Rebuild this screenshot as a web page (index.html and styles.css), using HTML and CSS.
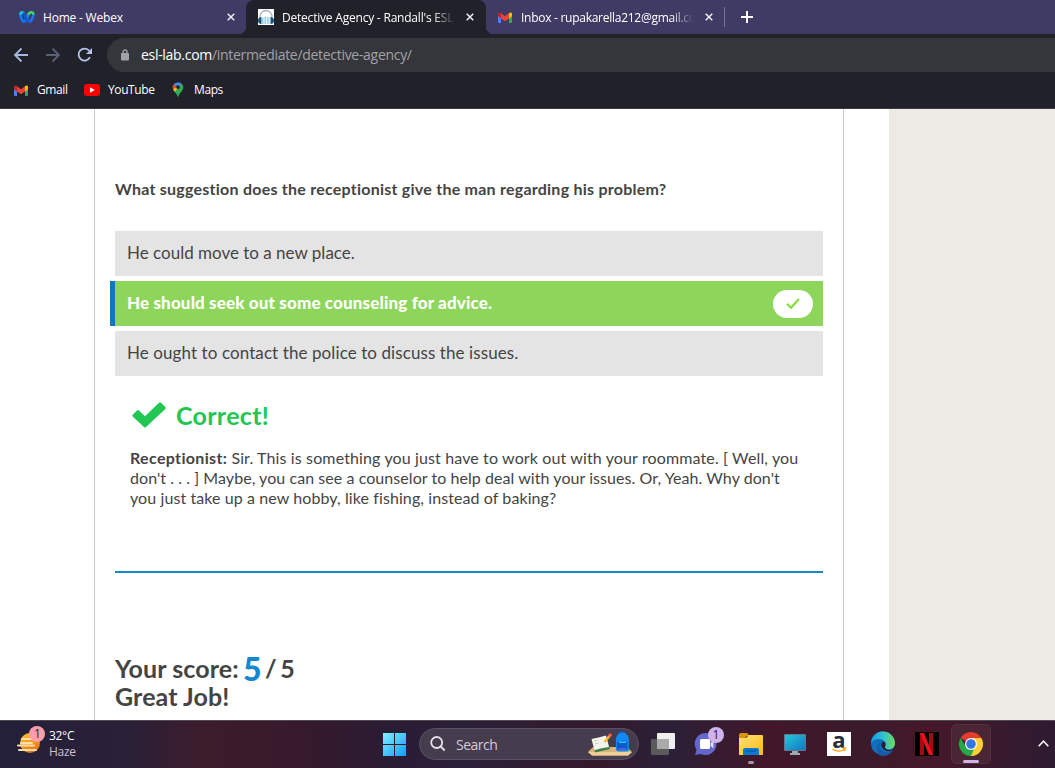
FILE: index.html
```html
<!DOCTYPE html>
<html lang="en">
<head>
<meta charset="utf-8">
<title>Detective Agency - Randall's ESL</title>
<link rel="stylesheet" href="styles.css">
</head>
<body>
<svg class="defs" width="0" height="0" aria-hidden="true">
  <symbol id="gmail" viewBox="0 0 14 11">
    <path fill="#4285f4" d="M0 2h3v9H1a1 1 0 0 1-1-1z"/>
    <path fill="#34a853" d="M11 3h3v7a1 1 0 0 1-1 1h-2z"/>
    <path fill="#fbbc04" d="M11 1.2C12.300 0 14 .6 14 2v2.200l-3 2.200z"/>
    <path fill="#c5221f" d="M0 2C0 .6 1.700 0 3 1.200v5.200L0 4.200z"/>
    <path fill="#ea4335" d="M3 1.200l4 3 4-3v5.200L7 9.300 3 6.400z"/>
  </symbol>
  <symbol id="close" viewBox="0 0 8 8"><path d="M.7.7l6.600 6.600M7.300.7L.7 7.300" stroke="#eeedf5" stroke-width="1.500"/></symbol>
</svg>
<header class="browser">
  <div class="tabs">
    <div class="tab tab-first">
      <svg class="fav" width="16" height="12" viewBox="0 0 16 12" fill="none" stroke-width="2.600" stroke-linecap="round">
        <path d="M8 7.500C9.500 12 12 11 13.300 7.500 14.400 5 14.700 3.500 14.300 2.500" stroke="#1676f3"/>
        <path d="M8.500 5.500C9.500 2 11 1.200 12.500 1.200q1.500.2 1.800 1.600" stroke="#42d36b"/>
        <path d="M1.500 3C1.500 6 3 10.500 5 10.500S7.500 8 8.500 5" stroke="#087cf0"/>
        <path d="M1.500 3C1.300 1.200 4 .8 5 2.500" stroke="#18c5da"/>
        <path d="M5 2.500C6.500 6 7 10 9.500 10.500" stroke="#1850d8"/>
      </svg>
      <span class="tab-title home">Home - Webex</span>
      <svg class="x" width="8" height="8"><use href="#close"/></svg>
    </div>
    <div class="tab tab-active">
      <svg class="fav" width="16" height="16" viewBox="0 0 16 16">
        <path fill="#fff" d="M0 0h16v16H0z"/><path d="M2 9C1-1 15-1 14 9" fill="none" stroke="#a6b2bc" stroke-width="1.300"/>
        <path d="M4 15V9q4-3 8 0v6z" fill="#9ed0e6"/><path d="M6 8v7M8.500 7v8M11 8v7" stroke="#e9f6fa"/>
        <path d="M3.500 8v7C1 15 0 13.500 0 11.500S1.500 8 3.500 8zM12.500 8v7c2.500 0 3.500-1.500 3.500-3.500S14.500 8 12.500 8z" fill="#17577d"/>
      </svg>
      <span class="tab-title fade detective">Detective Agency - Randall's ESL</span>
      <svg class="x" width="8" height="8"><use href="#close"/></svg>
    </div>
    <div class="tab tab-last">
      <svg class="fav" width="14" height="11"><use href="#gmail"/></svg>
      <span class="tab-title fade inbox">Inbox - rupakarella212@gmail.co</span>
      <svg class="x" width="8" height="8"><use href="#close"/></svg>
    </div>
    <span class="tab-rule"></span>
    <svg class="new-tab" width="12" height="12" viewBox="0 0 12 12"><path d="M6 0v12M0 6h12" stroke="#fff" stroke-width="1.900"/></svg>
  </div>
  <div class="toolbar">
    <svg class="nav" width="90" height="34" viewBox="0 0 90 34" fill="none" stroke-width="1.800">
      <path d="M28 17H15M21.500 10.500L15 17l6.500 6.500" stroke="#a8b7da"/>
      <path d="M46 17h13M52.500 10.500L59 17l-6.500 6.500" stroke="#596174"/>
      <path d="M90 19.200A6 6 0 1 1 89.300 12.800" stroke="#b5c4e8"/><path d="M92 10v6h-6z" fill="#b5c4e8"/>
    </svg>
    <div class="omnibox">
      <svg width="8" height="12" viewBox="0 0 8 12"><path d="M2 5V3a2 2 0 0 1 4 0v2" fill="none" stroke="#a0a2a8" stroke-width="1.300"/><rect y="4" width="8" height="7.500" rx="1" fill="#a0a2a8"/></svg>
      <span class="url"><b>esl-lab.com</b>/intermediate/detective-agency/</span>
    </div>
  </div>
  <nav class="bookmarks">
    <svg width="14" height="11"><use href="#gmail"/></svg><span class="bm-gmail">Gmail</span>
    <svg width="16" height="12" viewBox="0 0 16 12"><rect width="16" height="12" rx="3" fill="#f00"/><path d="M6 3.300L10.800 6 6 8.700z" fill="#fff"/></svg><span class="bm-youtube">YouTube</span>
    <svg width="12" height="16" viewBox="0 0 12 16">
      <path d="M.7 5C.7-.8 11.300-.8 11.300 5 11.300 9 7.500 10.500 6 15.500 4.500 10.500.7 9 .7 5z" fill="#34a853"/>
      <path d="M6 .6a5 5 0 0 0-4 1.700L6 5.500 9.500 1.700A5 5 0 0 0 6 .6z" fill="#4285f4"/>
      <path d="M2 2.300C.5 4 .5 6 1.200 7.500L5 4.700z" fill="#ea4335"/><path d="M1.200 7.500L2.800 9.700 9 3l-4 1.700z" fill="#fbbc04"/><circle cx="6" cy="5.100" r="1.900" fill="#202129"/>
    </svg><span class="bm-maps">Maps</span>
  </nav>
</header>
<main class="page">
  <article class="quiz">
    <h2 class="question">What suggestion does the receptionist give the man regarding his problem?</h2>
    <ul class="answers">
      <li><span>He could move to a new place.</span></li>
      <li class="chosen"><span>He should seek out some counseling for advice.</span>
        <i class="pill"><svg width="14" height="11" viewBox="0 0 14 11"><path d="M1 5.800l4 3.900L13 1" fill="none" stroke="#7de02f" stroke-width="2"/></svg></i></li>
      <li><span class="third">He ought to contact the police to discuss the issues.</span></li>
    </ul>
    <section class="feedback">
      <h3><svg width="34" height="26" viewBox="0 0 34 26"><path d="M.7 12.800L5 8.500q1-1 2 0l6 5.700L27 .8q1-1 2 0l4.300 4.100q1 1 0 2L14 25q-1 1-2 0L.7 14.600q-1-.9 0-1.800z" fill="#22c652"/></svg><span>Correct!</span></h3>
      <p><b>Receptionist:</b> <span class="first-line">Sir. This is something you just have to work out with your roommate. [ Well, you</span><br><span class="second-line">don't . . . ] Maybe, you can see a counselor to help deal with your issues. Or, Yeah. Why don't</span><br>you just take up a new hobby, like fishing, instead of baking?</p>
    </section>
    <section class="score">Your score: <span class="fraction"><strong>5</strong> / 5</span><br>Great Job!</section>
  </article>
  <aside class="gutter"></aside>
</main>
<footer class="taskbar">
  <div class="weather">
    <svg width="30" height="30" viewBox="0 0 30 30">
      <defs><linearGradient id="sun" x2=".4" y2="1"><stop stop-color="#ffca28"/><stop offset="1" stop-color="#ef7410"/></linearGradient></defs>
      <circle cx="13" cy="17" r="10" fill="url(#sun)"/><path d="M5 13h11M4 17h11M1 19.500h16M2 24h17" stroke="#f5dfae" stroke-width="2" stroke-linecap="round"/>
      <circle cx="20" cy="8" r="8" fill="#fb9eaa"/><text x="20.500" y="12" class="badge-text">1</text>
    </svg>
    <div class="weather-text"><span class="temp">32°C</span><span class="haze">Haze</span></div>
  </div>
  <svg class="start" width="23" height="23" viewBox="0 0 23 23"><defs><linearGradient id="win" x2="1" y2="1"><stop stop-color="#7ff0ff"/><stop offset="1" stop-color="#139bf6"/></linearGradient></defs><path d="M0 0h11v11H0zM12 0h11v11H12zM0 12h11v11H0zM12 12h11v11H12z" fill="url(#win)"/></svg>
  <div class="search">
    <svg width="16" height="16" viewBox="0 0 16 16" fill="none" stroke="#e4e0e8" stroke-width="1.800"><circle cx="6.700" cy="6.500" r="5.500"/><path d="M10.700 10.500l4 4"/></svg>
    <span>Search</span>
    <svg class="scene" width="45" height="26" viewBox="0 0 45 26">
      <path d="M0 21l5-5h34l5 5-4 3.500H4z" fill="#d9b27d"/><path d="M0 21h44l-4 3.500H4z" fill="#f1cf98"/>
      <path d="M4 10l15-3 3 11-15 3.500z" fill="#38814b"/><path d="M3.500 8l7-1.500 2 11-6 1.800zM10.500 6.500L18 4.500l3 11.500-8.500 1.500z" fill="#f6f5ed"/><path d="M6 10l3.500-.8M7 13l3.500-.8" stroke="#bbb" stroke-width=".7"/>
      <path d="M16.500 11l5-6" stroke="#ffb529" stroke-width="2.600"/><path d="M21 5.500l2-2.500" stroke="#ee624f" stroke-width="3"/>
      <path d="M31 3c0-3 6-3 6 0" fill="none" stroke="#1553bd" stroke-width="1.500"/><path d="M28 9q0-7 6-7.500T41 9v9q0 2.500-3 2.500h-7q-3 0-3-2.500z" fill="#1288f2"/><path d="M29 11h10.500v6q0 2-2 2H31q-2 0-2-2z" fill="#075bc6"/><path d="M31 11.500h7" stroke="#42bdff"/><path d="M31 18h7" stroke="#b05fff"/>
    </svg>
  </div>
  <svg class="task-view" width="24" height="22" viewBox="0 0 24 22"><rect y="6" width="18" height="16" rx="1" fill="#5b5b5b"/><rect x="6" width="18" height="16" rx="1" fill="#eee"/><path d="M6 6h12v10H6z" fill="#aaa"/></svg>
  <svg class="chat" width="30" height="30" viewBox="0 0 30 30"><path d="M11 6A11 11 0 1 1 7 27l-6 1 1.500-5A11 11 0 0 1 11 6z" fill="#6466cb"/><rect x="6" y="12" width="10" height="10" rx="1.500" fill="#fff"/><path d="M16.500 16l3-2.500v8l-3-2.500z" fill="#ddd9fa"/><circle cx="22" cy="8" r="8" fill="#cfb3e9"/><text x="22" y="12" class="badge-text">1</text></svg>
  <svg class="folder" width="24" height="32" viewBox="0 0 24 32"><defs><linearGradient id="fold" x2="1" y2="1"><stop stop-color="#ffdf78"/><stop offset="1" stop-color="#ffbb16"/></linearGradient></defs><path d="M0 2q0-2 2-2h6l3 3h-3l-2 2H0z" fill="#d89605"/><path d="M0 5h7l3-3h13q1 0 1 1v19H0z" fill="url(#fold)"/><path d="M4 22v-5q0-2 2-2h12q2 0 2 2v5z" fill="#087bd0"/><path d="M7 18h10" stroke="#075ca3" stroke-width="1.500"/><rect x="9" y="28" width="6" height="3" rx="1.500" fill="#a8969f"/></svg>
  <svg class="monitor" width="22" height="21" viewBox="0 0 22 21"><defs><linearGradient id="scr" x2="1" y2="1"><stop stop-color="#26c6d7"/><stop offset="1" stop-color="#1476c4"/></linearGradient></defs><rect width="22" height="17" rx="1" fill="#62788a"/><path d="M1 1h20v15H1z" fill="url(#scr)"/><path d="M8 17h6v2h2v2H6v-2h2z" fill="#9cabb2"/></svg>
  <svg class="amazon" width="24" height="24" viewBox="0 0 24 24"><path fill="#fff" d="M0 0h24v24H0z"/><text x="12" y="16" class="amazon-a">a</text><path d="M5.500 17q6 4 12 .5M15.500 16l3 .2-1.500 2.800" fill="none" stroke="#ff9d0a" stroke-width="1.400"/></svg>
  <svg class="edge" width="24" height="24" viewBox="0 0 24 24"><defs><linearGradient id="eg" x1="0" x2="1"><stop stop-color="#1598dd"/><stop offset=".5" stop-color="#30c1d4"/><stop offset="1" stop-color="#70da55"/></linearGradient></defs><path d="M0 12a12 12 0 0 1 24-1c0 3-2 6-3 8A12 12 0 0 1 0 12z" fill="#126fbd"/><path d="M0 12A12 12 0 0 1 24 11c0 5-4 7-8 6-3-1-2-2-1.500-4C15 10 12 7 8 7 4 7 1 9 0 12z" fill="url(#eg)"/><path d="M10 10c-4 5 0 12 8 10l4-1.500A12 12 0 0 1 12 24C6 24 4 16 8 11q1-1 2-1z" fill="#1659a6"/><path d="M12 9.500c3 0 3 3 2 5-.5 2 2 3.500 5 3.500 2 0 4-1.500 4-1.500-1 3-7 4-10 1s-3.500-5-1-8z" fill="#2c1b2c"/></svg>
  <svg class="netflix" width="24" height="24" viewBox="0 0 24 24"><path d="M0 0h24v24H0z"/><path d="M5 1h4v22H5zM14 1h4v22h-4z" fill="#a90810"/><path d="M5 1h4l9 22h-4z" fill="#ec111d"/></svg>
  <div class="chrome-tile"><svg width="24" height="24" viewBox="0 0 24 24"><path d="M12 12L1.600 6A12 12 0 0 1 22.400 6z" fill="#e33b2e"/><path d="M12 12V6h10.400A12 12 0 0 1 12 24z" fill="#ffd034"/><path d="M1.600 6L7 15l5 3 3-1-3 7A12 12 0 0 1 1.600 6z" fill="#28a64a"/><circle cx="12" cy="12" r="6" fill="#fff"/><circle cx="12" cy="12" r="4.800" fill="#3277e1"/></svg><span></span></div>
  <svg class="chevron" width="11" height="7" viewBox="0 0 11 7"><path d="M.7 6.200l4.800-5 4.800 5" fill="none" stroke="#fff" stroke-width="1.500"/></svg>
</footer>
</body>
</html>
```

FILE: styles.css
```css
* { box-sizing: border-box; }
body { margin: 0; width: 1055px; height: 768px; overflow: hidden; display: flex; flex-direction: column; background: #fff; font-family: "Open Sans", sans-serif; }
svg { display: block; flex: none; overflow: visible; }
.defs { position: absolute; }
.browser { height: 109px; flex: none; background: #202129; border-bottom: 1px solid #3b3b43; color: #fff; font-size: 12px; }
.tabs { height: 34px; display: flex; align-items: center; background: #403b64; }
.tab { height: 34px; display: flex; align-items: center; white-space: nowrap; flex: none; }
.tab-first { width: 246px; padding-left: 19px; background: radial-gradient(circle at 0 0, #403b64 8px, #202129 8.500px) right bottom / 8px 8px no-repeat; }
.tab-first .fav { margin-right: 8px; }
.home { width: 184px; letter-spacing: -.2px; }
.tab-active { width: 240px; padding-left: 12px; background: #202129; border-radius: 8px 8px 0 0; }
.tab-active .fav { margin-right: 8px; }
.detective { width: 184px; letter-spacing: -.21px; }
.tab-last { width: 238px; padding-left: 12px; background: radial-gradient(circle at 8px 0, #403b64 8px, #202129 8.500px) left bottom / 8px 8px no-repeat; }
.tab-last .fav { margin-right: 9px; }
.inbox { width: 184px; letter-spacing: -.27px; }
.fade { overflow: hidden; -webkit-mask-image: linear-gradient(90deg, #000 150px, transparent 173px); mask-image: linear-gradient(90deg, #000 150px, transparent 173px); }
.tab-rule { width: 1px; height: 20px; background: #777294; }
.new-tab { margin-left: 16px; }
.toolbar { height: 38px; padding-top: 4px; display: flex; }
.nav { margin-right: 17px; }
.omnibox { flex: 1; height: 34px; padding-left: 14px; display: flex; align-items: center; background: #35363b; border-radius: 17px 0 0 17px; }
.url { margin-left: 12px; margin-top: -1px; font-size: 14px; letter-spacing: -.3px; color: #a0a2a8; white-space: nowrap; }
.url b { color: #fff; font-weight: 400; }
.bookmarks { height: 36px; padding-left: 14px; display: flex; align-items: center; }
.bookmarks span { margin-left: 9px; margin-top: -1px; letter-spacing: -.4px; }
.bookmarks .bm-gmail { width: 47px; }
.bookmarks .bm-youtube { width: 64px; margin-left: 8px; }
.bookmarks .bm-maps { margin-left: 10px; }
.page { height: 611px; flex: none; overflow: hidden; display: flex; justify-content: space-between; color: #444; font-family: Lato, sans-serif; font-variant-ligatures: none; }
.quiz { width: 750px; margin-left: 94px; padding: 70px 20px 0; border: solid #ccc; border-width: 0 1px; }
.question { margin: 0 0 32px; font-size: 16px; line-height: 20px; font-weight: 700; letter-spacing: .24px; white-space: nowrap; }
.answers { list-style: none; margin: 0; padding: 0; display: grid; gap: 5px; }
.answers li { height: 45px; padding: 0 10px 2px 12px; display: flex; align-items: center; background: #e4e4e4; font-size: 17px; white-space: nowrap; }
.answers .chosen { margin-left: -5px; border-left: 5px solid #1178b8; justify-content: space-between; background: #8dd55b; color: #fff; font-weight: 900; letter-spacing: .14px; }
.third { letter-spacing: .09px; }
.pill { width: 40px; height: 28px; margin-top: 2px; border-radius: 14px; background: #fff; display: flex; align-items: center; justify-content: center; }
.feedback { height: 197px; padding: 22px 15px 0; border-bottom: 2px solid #1688cc; }
.feedback h3 { margin: 0 0 16px; height: 34px; display: flex; align-items: center; gap: 10px; color: #22c652; font-size: 25px; font-weight: 700; letter-spacing: .3px; }
.feedback h3 svg { margin-left: 2px; margin-top: -1px; }
.feedback p { margin: 0; font-size: 16px; line-height: 20px; letter-spacing: .09px; white-space: nowrap; }
.feedback b { letter-spacing: .34px; }
.first-line { letter-spacing: .13px; }
.second-line { letter-spacing: .06px; }
.score { padding-top: 81px; font-size: 25px; line-height: 28px; font-weight: 700; letter-spacing: .1px; }
.fraction { word-spacing: -1.500px; letter-spacing: -.5px; }
.score strong { display: inline-block; margin: 0 0 0 -2px; color: #1688d2; font-size: 32px; line-height: 20px; transform: translateY(3px); }
.gutter { width: 166px; background: #ebeae5; }
.taskbar { height: 48px; flex: none; display: flex; border-top: 1px solid #524954; background: linear-gradient(90deg, #24203a 0, #2a2037 130px, #3d1c2b 205px, #35192c 310px, #291d35 400px, #2a2037 470px, #35192c 600px, #2a2037 665px, #43172a 770px, #391b2b 850px, #451829 930px, #2d1b31 1055px); color: #fff; }
.weather { width: 382px; padding: 5px 0 0 17px; display: flex; }
.weather-text { margin: 2px 0 0 2px; display: grid; align-content: start; line-height: 16px; font-size: 12px; letter-spacing: -.3px; }
.haze { color: #c8c2cd; letter-spacing: -.3px; }
.badge-text { font: 12px "Open Sans", sans-serif; fill: #2a1e36; text-anchor: middle; }
.start { margin: 12px 0 0 1px; }
.search { width: 220px; height: 32px; margin: 7px 0 0 13px; padding: 0 5px 0 10px; border: 1px solid #5b5063; border-radius: 16px; background: #453c4e; display: flex; align-items: center; font-size: 14px; letter-spacing: -.5px; color: #d1ccd5; }
.search span { margin-left: 10px; }
.scene { margin-left: auto; }
.task-view { margin: 12px 0 0 12px; }
.chat { margin: 6px 0 0 19px; }
.folder { margin: 12px 0 0 15px; }
.monitor { margin: 13px 0 0 21px; }
.amazon { margin: 11px 0 0 21px; }
.amazon-a { font: bold 22px "Open Sans", sans-serif; fill: #252f3e; text-anchor: middle; }
.edge { margin: 11px 0 0 20px; }
.netflix { margin: 11px 0 0 20px; }
.chrome-tile { width: 40px; height: 40px; margin: 3px 0 0 12px; border: 1px solid #55303e; border-radius: 5px; background: #4a2635; display: flex; flex-direction: column; align-items: center; padding-top: 7px; }
.chrome-tile span { width: 16px; height: 3px; margin-top: 4px; border-radius: 2px; background: #cfb3e9; }
.chevron { margin: 19px 0 0 47px; }
```
